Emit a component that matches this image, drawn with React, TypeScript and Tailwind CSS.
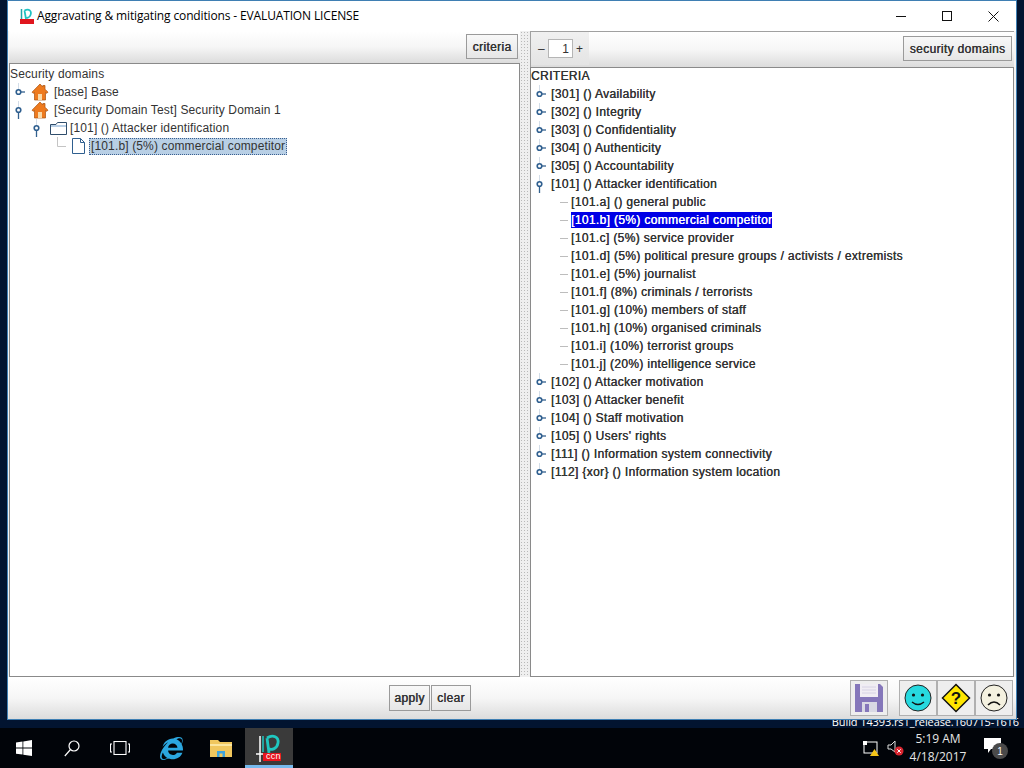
import React from "react";
import { FaInternetExplorer } from "react-icons/fa";

const font = "font-['Liberation_Sans',Arial,sans-serif]";
const bar = "bg-gradient-to-b from-white via-[#f6f6f6] to-[#dcdcdc]";

const Handle: React.FC<{ open?: boolean }> = ({ open }) => (
  <svg width="12" height="18" viewBox="0 0 12 18" className="shrink-0">
    <path d="M4.500 0V6" stroke="#d3dde8" />
    {open ? <path d="M4.500 11V18" stroke="#33618f" strokeWidth="1.300" /> : <path d="M7 9H11" stroke="#33618f" strokeWidth="1.300" />}
    <circle cx="4.500" cy="9" r="2.300" fill="#fff" stroke="#2f5f8f" strokeWidth="1.600" />
  </svg>
);

const House = () => (
  <svg width="18" height="18" viewBox="0 0 18 18" className="shrink-0">
    <path d="M9 1L1 9.200L2.400 10.300L3.500 9.400V17H14.500V9.400L15.600 10.300L17 9.200L14 6.200V2.500H11.800V4Z" fill="#ee7a1e" stroke="#a8500f" strokeWidth="0.700" />
    <rect x="7" y="11" width="4" height="6" fill="#f8d9a8" />
  </svg>
);

const Folder = () => (
  <svg width="17" height="14" viewBox="0 0 17 14" className="shrink-0">
    <path d="M0.500 3.500H6L7.500 1.500H16.500V13.500H0.500Z" fill="#fff" stroke="#2f4d6b" />
    <path d="M1 4H16V6H1Z" fill="#b8cfe6" />
  </svg>
);

const FileIcon = () => (
  <svg width="15" height="16" viewBox="0 0 15 16" className="shrink-0">
    <path d="M1.500 0.500H9.500L13.500 4.500V15.500H1.500Z" fill="#fff" stroke="#2f5f8f" />
    <path d="M9.500 0.500V4.500H13.500" fill="none" stroke="#2f5f8f" />
  </svg>
);

const Elbow = ({ w }: { w: number }) => (
  <svg width={w} height="18" viewBox={`0 0 ${w} 18`} className="shrink-0">
    <path d={`M0.500 0V9.500H${w}`} fill="none" stroke="#c4c4c4" />
  </svg>
);

const closedTop = ["[301] () Availability", "[302] () Integrity", "[303] () Confidentiality", "[304] () Authenticity", "[305] () Accountability"];
const leaves = [
  "[101.a] () general public",
  "[101.b] (5%) commercial competitor",
  "[101.c] (5%) service provider",
  "[101.d] (5%) political presure groups / activists / extremists",
  "[101.e] (5%) journalist",
  "[101.f] (8%) criminals / terrorists",
  "[101.g] (10%) members of staff",
  "[101.h] (10%) organised criminals",
  "[101.i] (10%) terrorist groups",
  "[101.j] (20%) intelligence service",
];
const closedBottom = ["[102] () Attacker motivation", "[103] () Attacker benefit", "[104] () Staff motivation", "[105] () Users' rights", "[111] () Information system connectivity", "[112] {xor} () Information system location"];

const heavy = "tracking-[0.35px] [text-shadow:0.35px_0_0_currentColor] text-[#333]";

const CritRow: React.FC<{ label: string; open?: boolean }> = ({ label, open }) => (
  <div className="flex h-[18px] items-center pl-[4px]">
    <Handle open={open} />
    <span className="ml-[4px] whitespace-nowrap">{label}</span>
  </div>
);

const PlainButton: React.FC<{ label: string; className?: string }> = ({ label, className }) => (
  <div className={`flex items-center justify-center border border-[#9a9a9a] bg-gradient-to-b from-[#f8f8f8] to-[#e6e6e6] text-[12px] text-[#333] ${heavy} ${className ?? ""}`}>{label}</div>
);

const FaceButton: React.FC<{ children: React.ReactNode }> = ({ children }) => (
  <div className="flex h-[36px] w-[38px] items-center justify-center border border-[#b0b0b0] bg-[#eeeeee]">{children}</div>
);

export default function App() {
  return (
    <div className={`relative flex h-[768px] w-[1024px] flex-col overflow-hidden bg-[#021430] ${font}`}>
      <div className="flex h-[728px] flex-col px-[7px]">
        {/* window */}
        <div className="relative z-10 flex h-[720px] w-[1010px] flex-col border border-[#3f7fb3] bg-[#f4f4f4]">
          <div className="flex h-[30px] shrink-0 items-center bg-white pl-[10px]">
            <svg width="16" height="16" viewBox="0 0 32 32">
              <path d="M7 2V22" stroke="#1fa7a8" strokeWidth="3" />
              <path d="M13 5C22 0 28 6 25 14C23 20 17 21 14 18M13 5L16 22" fill="none" stroke="#1fc2c2" strokeWidth="3.500" />
              <rect x="4" y="22" width="28" height="10" fill="#e0161e" />
            </svg>
            <span className="ml-[3px] font-['Open_Sans',sans-serif] text-[12px] tracking-[-0.14px] text-black">Aggravating &amp; mitigating conditions - EVALUATION LICENSE</span>
            <div className="ml-auto flex h-full">
              <div className="flex w-[46px] items-center justify-center">
                <svg width="10" height="10" viewBox="0 0 10 10"><path d="M0 5.500H10" stroke="#111" /></svg>
              </div>
              <div className="flex w-[46px] items-center justify-center">
                <svg width="10" height="10" viewBox="0 0 10 10"><rect x="0.500" y="0.500" width="9" height="9" fill="none" stroke="#111" /></svg>
              </div>
              <div className="flex w-[46px] items-center justify-center">
                <svg width="11" height="11" viewBox="0 0 11 11"><path d="M0.500 0.500L10.500 10.500M10.500 0.500L0.500 10.500" stroke="#111" /></svg>
              </div>
            </div>
          </div>

          <div className="flex min-h-0 flex-1 pl-px pr-[2px]">
            {/* left */}
            <div className="flex w-[511px] shrink-0 flex-col">
              <div className={`flex h-[32px] shrink-0 items-center justify-end pb-px pr-[2px] ${bar}`}>
                <PlainButton label="criteria" className="h-[25px] w-[52px]" />
              </div>
              <div className="flex-1 border border-[#8a8a8a] bg-white pt-[3px] text-[12px] leading-[14px] tracking-[0.14px] text-[#333]">
                <div className="mb-[2px] flex h-[14px] items-center">Security domains</div>
                <div className="flex h-[18px] items-center pl-[4px]">
                  <Handle />
                  <span className="ml-[5px]"><House /></span>
                  <span className="ml-[5px]">[base] Base</span>
                </div>
                <div className="flex h-[18px] items-center pl-[4px]">
                  <Handle open />
                  <span className="ml-[5px]"><House /></span>
                  <span className="ml-[5px]">[Security Domain Test] Security Domain 1</span>
                </div>
                <div className="flex h-[18px] items-center pl-[22px]">
                  <Handle open />
                  <span className="ml-[6px]"><Folder /></span>
                  <span className="ml-[3px]">[101] () Attacker identification</span>
                </div>
                <div className="flex h-[18px] items-center pl-[47px]">
                  <Elbow w={9} />
                  <span className="ml-[5px]"><FileIcon /></span>
                  <span className="ml-[3px] border border-dotted border-[#3a5f8f] bg-[#b8cfe5] px-px leading-[15px]">[101.b] (5%) commercial competitor</span>
                </div>
              </div>
            </div>

            {/* splitter */}
            <div className="w-[10px] shrink-0 bg-[#efefef] bg-[radial-gradient(#b9b9b9_0.6px,transparent_0.7px)] bg-[length:3px_3px] bg-[position:3px_0]" />

            {/* right */}
            <div className="flex min-w-0 flex-1 flex-col">
              <div className={`flex h-[36px] shrink-0 items-center border-l border-t border-[#a0a0a0] pb-[2px] ${bar}`}>
                <div className="flex h-full w-[58px] items-center bg-gradient-to-b from-[#f0f0f0] to-[#e4e4e4] pl-[7px] text-[12px] text-[#333]">
                  <span className="w-[10px]">–</span>
                  <span className="flex h-[19px] w-[25px] items-center justify-end border border-[#b5b5b5] bg-white pr-[3px]">1</span>
                  <span className="ml-[3px]">+</span>
                </div>
                <PlainButton label="security domains" className="ml-auto mr-[2px] h-[25px] w-[109px]" />
              </div>
              <div className={`flex-1 border border-[#8a8a8a] bg-white pt-px text-[12px] leading-[14px] ${heavy}`}>
                <div className="mb-[2px] flex h-[14px] items-center">CRITERIA</div>
                {closedTop.map((l) => (
                  <CritRow key={l} label={l} />
                ))}
                <CritRow label="[101] () Attacker identification" open />
                {leaves.map((l, i) => (
                  <div key={l} className="flex h-[18px] items-center pl-[29px]">
                    <div className="mr-[3px] h-px w-[8px] bg-[#bdbdbd]" />
                    <span className={`whitespace-nowrap leading-[16px] ${i === 1 ? "bg-[#0000e6] text-white" : ""}`}>{l}</span>
                  </div>
                ))}
                {closedBottom.map((l) => (
                  <CritRow key={l} label={l} />
                ))}
              </div>
            </div>
          </div>

          {/* bottom bar */}
          <div className={`flex h-[42px] shrink-0 items-center pr-[3px] ${bar}`}>
            <div className="ml-[381px] flex gap-px">
              <PlainButton label="apply" className="h-[26px] w-[41px]" />
              <PlainButton label="clear" className="h-[26px] w-[40px]" />
            </div>
            <div className="ml-auto flex h-[36px] w-[38px] items-center justify-center border border-[#b0b0b0] bg-[#eeeeee]">
              <svg width="28" height="28" viewBox="0 0 28 28">
                <path d="M0 0H25L28 3V28H0Z" fill="#8577ba" />
                <rect x="5" y="0" width="18" height="13" fill="#f0edf3" />
                <path d="M7 3H21M7 6H21M7 9H21" stroke="#d6d2e4" />
                <rect x="7" y="18" width="15" height="10" fill="#d9d9e4" />
                <rect x="10" y="20" width="4" height="8" fill="#8577ba" />
              </svg>
            </div>
            <div className="ml-[11px] flex">
              <FaceButton>
                <svg width="28" height="28" viewBox="0 0 28 28">
                  <circle cx="14" cy="14" r="13" fill="#27d9df" stroke="#222" />
                  <circle cx="9.500" cy="11" r="1.600" fill="#111" />
                  <circle cx="18.500" cy="11" r="1.600" fill="#111" />
                  <path d="M8 18Q14 23 20 18" fill="none" stroke="#111" strokeWidth="1.400" />
                </svg>
              </FaceButton>
              <FaceButton>
                <svg width="30" height="30" viewBox="0 0 30 30">
                  <path d="M15 1.500L28.500 15L15 28.500L1.500 15Z" fill="#ffe600" stroke="#111" strokeWidth="1.500" />
                  <text x="15" y="21" textAnchor="middle" fontSize="17" fontWeight="700" fontFamily="Liberation Sans" fill="#111">?</text>
                </svg>
              </FaceButton>
              <FaceButton>
                <svg width="28" height="28" viewBox="0 0 28 28">
                  <circle cx="14" cy="14" r="13" fill="#f4f1e0" stroke="#222" />
                  <circle cx="9.500" cy="11" r="1.600" fill="#111" />
                  <circle cx="18.500" cy="11" r="1.600" fill="#111" />
                  <path d="M8 21Q14 15 20 21" fill="none" stroke="#111" strokeWidth="1.600" />
                </svg>
              </FaceButton>
            </div>
          </div>
        </div>
      </div>

      {/* desktop watermark peeking out under the window */}
      <div className="absolute right-[5px] top-[714px] whitespace-nowrap font-['Open_Sans',sans-serif] text-[11px] tracking-[-0.1px] text-white">Build 14393.rs1_release.160715-1616</div>

      {/* taskbar */}
      <div className="relative z-10 flex h-[40px] shrink-0 items-center bg-[#010409] text-white">
        <div className="flex w-[48px] justify-center">
          <svg width="16" height="16" viewBox="0 0 16 16" fill="#fff">
            <path d="M0 2.400L6.500 1.500V7.600H0ZM7.300 1.400L16 0V7.600H7.300ZM0 8.400H6.500V14.600L0 13.700ZM7.300 8.400H16V16L7.300 14.700Z" />
          </svg>
        </div>
        <div className="flex w-[48px] justify-center">
          <svg width="16" height="17" viewBox="0 0 16 17" fill="none" stroke="#fff" strokeWidth="1.200">
            <circle cx="10" cy="6" r="5" />
            <path d="M6.500 9.500L0.800 16" />
          </svg>
        </div>
        <div className="flex w-[48px] justify-center">
          <svg width="20" height="14" viewBox="0 0 20 14" fill="none" stroke="#fff" strokeWidth="1.100">
            <rect x="4" y="0.500" width="12" height="13" />
            <path d="M2 3H0.500V11H2M18 3H19.500V11H18" />
          </svg>
        </div>
        <div className="flex w-[54px] justify-center">
          <FaInternetExplorer size={23} color="#2ba7e0" />
        </div>
        <div className="flex w-[46px] justify-center">
          <svg width="22" height="18" viewBox="0 0 22 18">
            <path d="M0 1H8L10 3H22V18H0Z" fill="#f0c75e" />
            <path d="M0 5H22V7H0Z" fill="#fbe6a0" />
            <path d="M7 18V12H15V18H12.500V14.500H9.500V18Z" fill="#3fa4dc" />
          </svg>
        </div>
        <div className="relative ml-[1px] flex h-full w-[48px] items-center justify-center border-b-[3px] border-[#76b9ed] bg-[#3a3a3a]">
          <svg width="32" height="30" viewBox="0 0 32 30">
            <path d="M3 22H11M7 4V30" stroke="#fff" strokeWidth="1.500" />
            <path d="M10 4V20" stroke="#1fc7c0" strokeWidth="1.500" />
            <path d="M14 6C20 2 26 5 25 11C24 17 18 19 15 16M14 6L16 21" fill="none" stroke="#1fc7c0" strokeWidth="2.800" />
            <rect x="10" y="21" width="18" height="8" fill="#e8141c" />
          </svg>
          <span className="absolute left-[21px] top-[24px] text-[9px] leading-[9px] tracking-[0.3px]">ccn</span>
        </div>

        <div className="ml-auto flex items-center">
          <svg width="18" height="18" viewBox="0 0 18 18">
            <rect x="2" y="3" width="13" height="11" fill="none" stroke="#fff" />
            <rect x="1" y="2" width="4" height="4" fill="#fff" />
            <path d="M12.500 10L17 17H8Z" fill="#f5c518" />
          </svg>
          <svg width="18" height="18" viewBox="0 0 18 18" className="ml-[7px]">
            <path d="M1 6H4L8 2V13L4 10H1Z" fill="none" stroke="#ddd" />
            <circle cx="12" cy="12" r="4.500" fill="#d9252f" />
            <path d="M10.300 10.300L13.700 13.700M13.700 10.300L10.300 13.700" stroke="#fff" />
          </svg>
          <div className="ml-[5px] flex w-[56px] flex-col items-center font-['Open_Sans',sans-serif] text-[12px] leading-[18px] text-[#e6e6e6]">
            <span>5:19 AM</span>
            <span>4/18/2017</span>
          </div>
          <div className="relative ml-[18px] mr-[18px] h-[24px] w-[22px]">
            <svg width="17" height="15" viewBox="0 0 17 15" className="absolute left-0 top-[2px]">
              <path d="M0 0H17V11H7L4 15V11H0Z" fill="#fff" />
            </svg>
            <span className="absolute left-[8px] top-[7px] flex h-[16px] w-[16px] items-center justify-center rounded-full bg-[#4a4a4a] text-[10px] text-white">1</span>
          </div>
        </div>
      </div>
    </div>
  );
}
